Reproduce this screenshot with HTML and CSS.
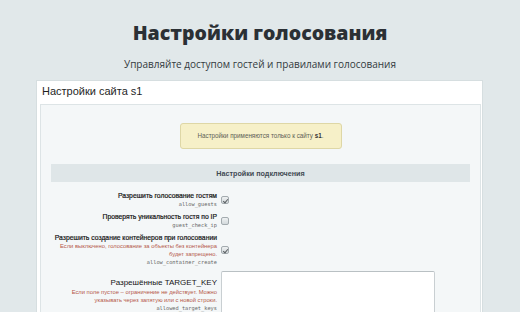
FILE: index.html
```html
<!DOCTYPE html>
<html lang="ru">
<head>
<meta charset="utf-8">
<link rel="stylesheet" href="styles.css">
</head>
<body>
<header class="hero">
  <h1 class="title">Настройки голосования</h1>
  <p class="subtitle">Управляйте доступом гостей и правилами голосования</p>
</header>
<section class="card">
  <div class="card-head">Настройки сайта s1</div>
  <div class="panel">
    <div class="notice">Настройки применяются только к сайту <b>s1</b>.</div>
    <div class="band">Настройки подключения</div>
    <div class="rows">
      <div class="row">
        <div class="label">
          <div class="name">Разрешить голосование гостям</div>
          <div class="code">allow_guests</div>
        </div>
        <div class="ctl"><span class="cb checked"></span></div>
      </div>
      <div class="row">
        <div class="label">
          <div class="name">Проверять уникальность гостя по IP</div>
          <div class="code">guest_check_ip</div>
        </div>
        <div class="ctl"><span class="cb"></span></div>
      </div>
      <div class="row">
        <div class="label">
          <div class="name">Разрешить создание контейнеров при голосовании</div>
          <div class="hint">Если выключено, голосование за объекты без контейнера<br>будет запрещено.</div>
          <div class="code">allow_container_create</div>
        </div>
        <div class="ctl"><span class="cb checked"></span></div>
      </div>
      <div class="row row-area">
        <div class="label label-area">
          <div class="name big">Разрешённые TARGET_KEY</div>
          <div class="hint">Если поле пустое – ограничение не действует. Можно<br>указывать через запятую или с новой строки.</div>
          <div class="code">allowed_target_keys</div>
        </div>
        <div class="ctl ctl-area"><textarea class="area"></textarea></div>
      </div>
    </div>
  </div>
</section>
</body>
</html>
```
FILE: styles.css
```css
* { box-sizing: border-box; }
html, body { margin: 0; padding: 0; }
body {
  background: #e1e8ea;
  font-family: "Liberation Sans", Arial, sans-serif;
  width: 520px;
  height: 312px;
  overflow: hidden;
}
.hero {
  text-align: center;
  padding-top: 20px;
}
.title {
  margin: 0;
  font-family: "Open Sans", sans-serif;
  font-weight: 800;
  font-size: 19.5px;
  line-height: 26px;
  color: #2b3035;
}
.subtitle {
  margin: 11px 0 0;
  font-family: "Open Sans", sans-serif;
  font-size: 10px;
  line-height: 14px;
  color: #333a40;
}
.card {
  margin: 9px 37px 0 36px;
  background: #fff;
  border: 1px solid #d6dee0;
  border-bottom: 0;
  height: 300px;
  padding: 0 1px 0 3px;
}
.card-head {
  font-size: 11px;
  color: #1f1f1f;
  padding: 4px 0 0 2px;
  height: 23px;
}
.panel {
  background: #f4f7f8;
  border: 1px solid #dde4e6;
  height: 260px;
  padding: 18px 10px 0 10px;
}
.notice {
  width: 162px;
  height: 26px;
  margin: 0 auto;
  background: #f6f0c8;
  border: 1px solid #ded7a6;
  border-radius: 3px;
  font-size: 6.3px;
  line-height: 24px;
  color: #5d5f55;
  text-align: center;
}
.notice b { color: #333; }
.band {
  margin-top: 15px;
  height: 18px;
  background: #dfe6e8;
  font-size: 7.2px;
  font-weight: bold;
  color: #3f4a53;
  display: flex;
  align-items: center;
  justify-content: center;
}
.rows { padding-top: 10px; }
.row {
  display: grid;
  grid-template-columns: 166px 1fr;
  column-gap: 4px;
  align-items: center;
  margin-bottom: 5px;
}
.label { text-align: right; white-space: nowrap; }
.name {
  font-size: 6.8px;
  line-height: 8px;
  color: #151515;
  -webkit-text-stroke: 0.2px #151515;
}
.name.big { font-size: 8px; line-height: 10px; -webkit-text-stroke: 0; }
.code {
  font-family: "DejaVu Sans Mono", monospace;
  font-size: 5.3px;
  line-height: 8px;
  color: #666;
}
.hint {
  font-size: 5.8px;
  line-height: 8px;
  color: #b5584a;
}
.cb {
  display: block;
  width: 8px;
  height: 8px;
  border: 1px solid #a3abaf;
  border-radius: 2px;
  background: linear-gradient(#eef1f2, #d3d9dc);
  position: relative;
}
.cb.checked::after {
  content: "";
  position: absolute;
  left: 2px;
  top: 0.5px;
  width: 2px;
  height: 4px;
  border: solid #5a5f62;
  border-width: 0 1px 1px 0;
  transform: rotate(40deg);
}
.row-area { align-items: start; }
.label-area { padding-top: 7px; }
.area {
  display: block;
  width: 214px;
  height: 60px;
  border: 1px solid #c9cfd2;
  border-top-color: #b9c0c3;
  border-radius: 2px;
  background: #fff;
  resize: none;
  margin: 0;
  padding: 0;
}
```
